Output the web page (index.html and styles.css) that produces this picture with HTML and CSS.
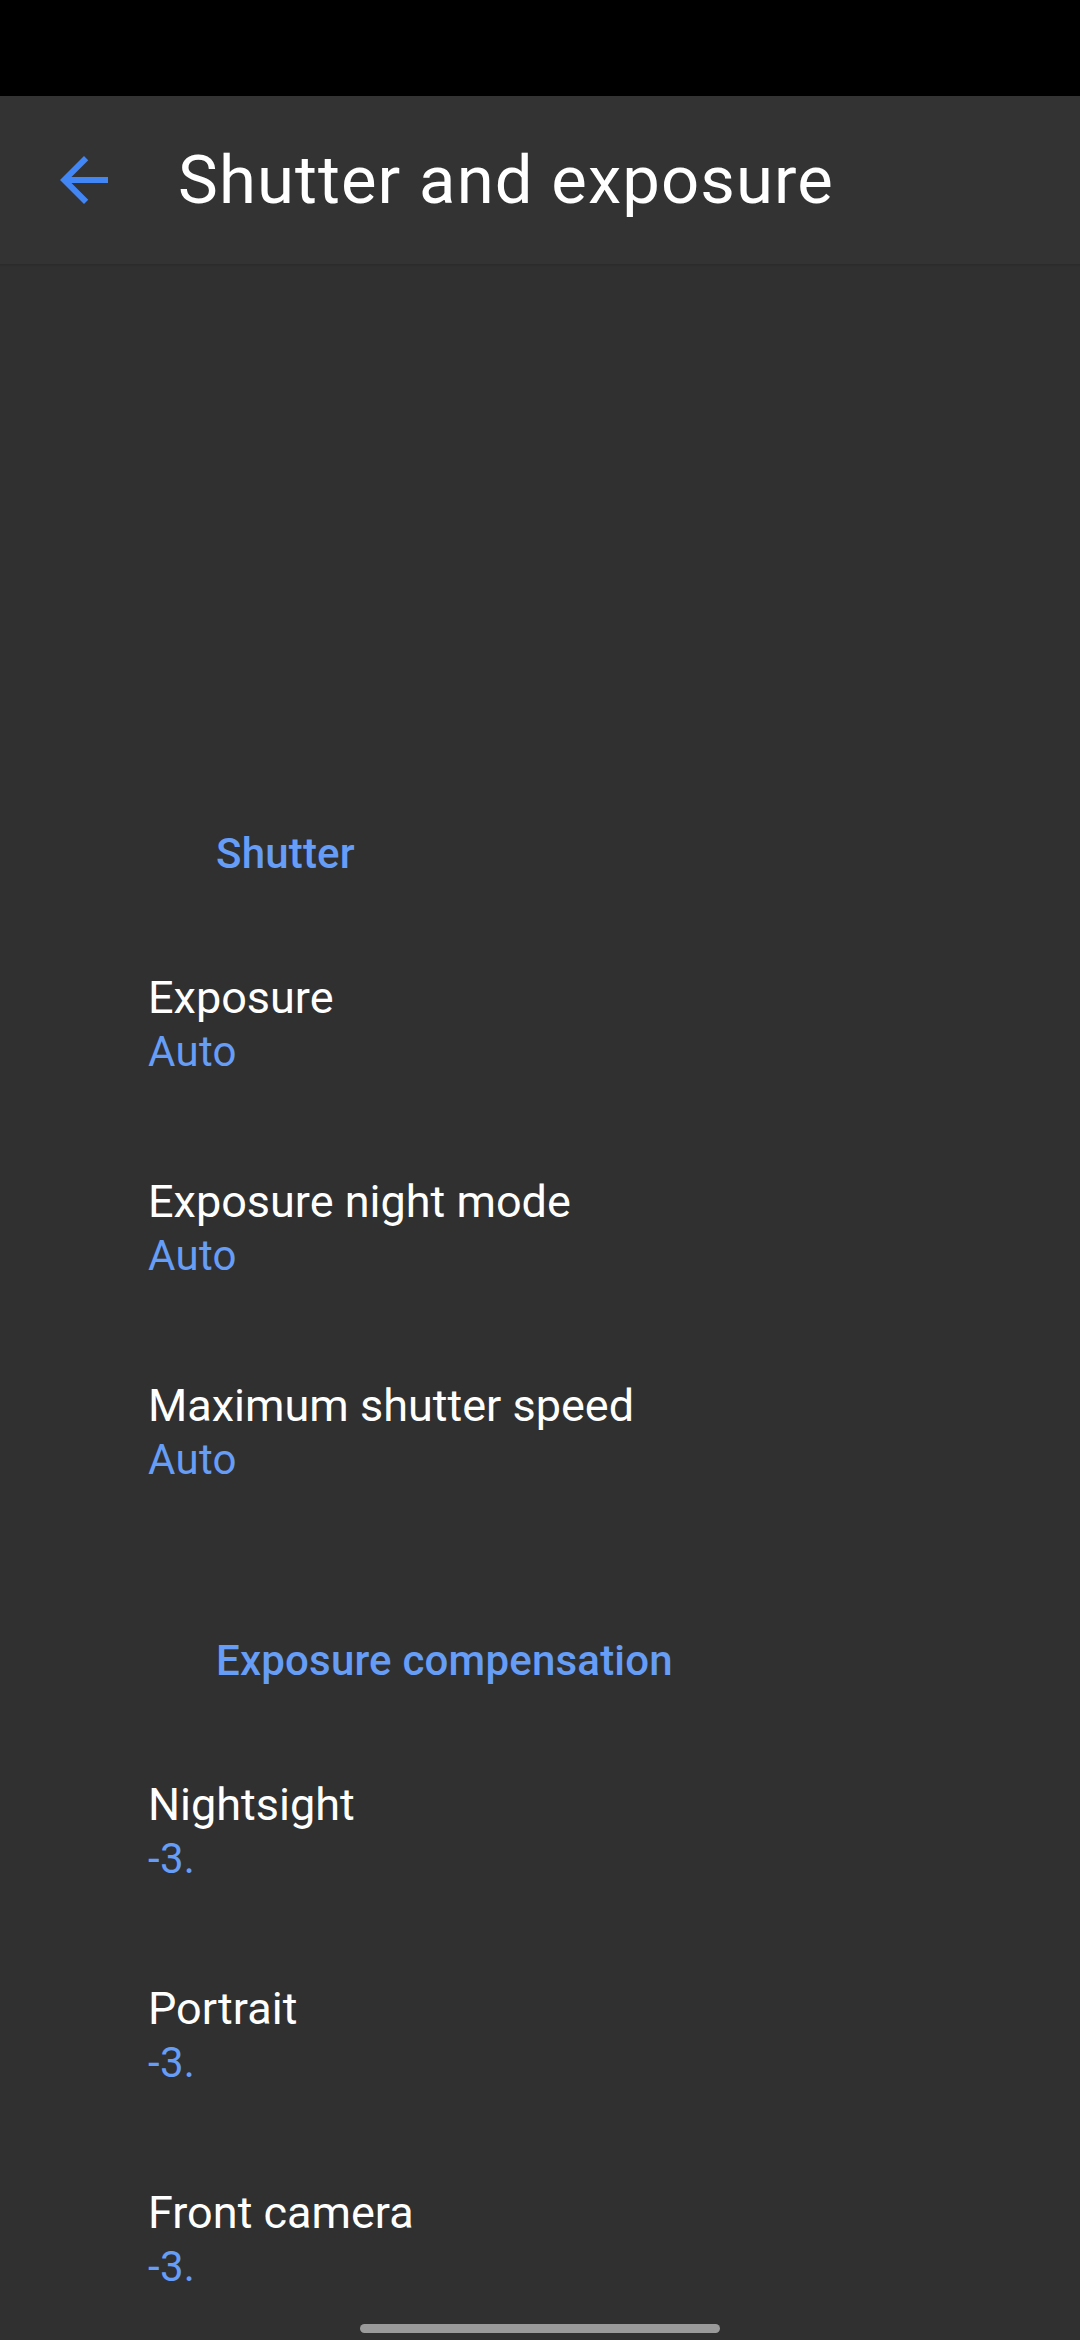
FILE: index.html
```html
<!DOCTYPE html>
<html lang="en">
<head>
<meta charset="utf-8">
<title>Shutter and exposure</title>
<link rel="stylesheet" href="styles.css">
</head>
<body>
<div class="status-bar"></div>
<header class="app-bar">
  <span class="nav-icon">
    <svg viewBox="0 0 24 24" width="72" height="72"><path d="M20 11H7.83l5.59-5.59L12 4l-8 8 8 8 1.41-1.41L7.83 13H20v-2z" fill="#4285f4"/></svg>
  </span>
  <h1 class="title">Shutter and exposure</h1>
</header>
<main class="content">
  <section class="category">
    <h2 class="category-title">Shutter</h2>
    <div class="pref"><div class="pref-title">Exposure</div><div class="pref-summary">Auto</div></div>
    <div class="pref"><div class="pref-title">Exposure night mode</div><div class="pref-summary">Auto</div></div>
    <div class="pref"><div class="pref-title">Maximum shutter speed</div><div class="pref-summary">Auto</div></div>
  </section>
  <section class="category category-next">
    <h2 class="category-title">Exposure compensation</h2>
    <div class="pref"><div class="pref-title">Nightsight</div><div class="pref-summary">-3.</div></div>
    <div class="pref"><div class="pref-title">Portrait</div><div class="pref-summary">-3.</div></div>
    <div class="pref"><div class="pref-title">Front camera</div><div class="pref-summary">-3.</div></div>
  </section>
</main>
<div class="nav-handle"></div>
</body>
</html>
```
FILE: styles.css
```css
html, body {
  margin: 0;
  padding: 0;
}
body {
  width: 1080px;
  height: 2340px;
  overflow: hidden;
  background: #303030;
  font-family: Roboto, "Noto Sans", sans-serif;
  color: #ffffff;
}
.status-bar {
  height: 96px;
  background: #000000;
}
.app-bar {
  height: 168px;
  background: #333333;
  display: flex;
  align-items: center;
  padding-left: 48px;
  box-shadow: 0 1px 2px rgba(0,0,0,0.15);
  position: relative;
}
.nav-icon {
  width: 72px;
  height: 72px;
  display: flex;
}
.title {
  margin: 0 0 0 58px;
  font-size: 67px;
  font-weight: 400;
  letter-spacing: 1.1px;
  line-height: 80px;
  color: #ffffff;
}
.content {
  padding-top: 560px;
}
.category-title {
  margin: 0 0 37px 0;
  padding-left: 216px;
  font-size: 42px;
  font-weight: 500;
  letter-spacing: 0.2px;
  line-height: 60px;
  height: 60px;
  color: #669df6;
}
.category-next {
  margin-top: 98px;
}
.pref {
  padding: 49px 0 47px 148px;
}
.pref-title {
  font-size: 45px;
  line-height: 56px;
  height: 56px;
  color: #ffffff;
}
.pref-summary {
  font-size: 42px;
  letter-spacing: 0.3px;
  line-height: 52px;
  height: 52px;
  color: #669df6;
}
.nav-handle {
  position: fixed;
  left: 360px;
  bottom: 7px;
  width: 360px;
  height: 9px;
  border-radius: 5px;
  background: #9a9a9a;
}
```
